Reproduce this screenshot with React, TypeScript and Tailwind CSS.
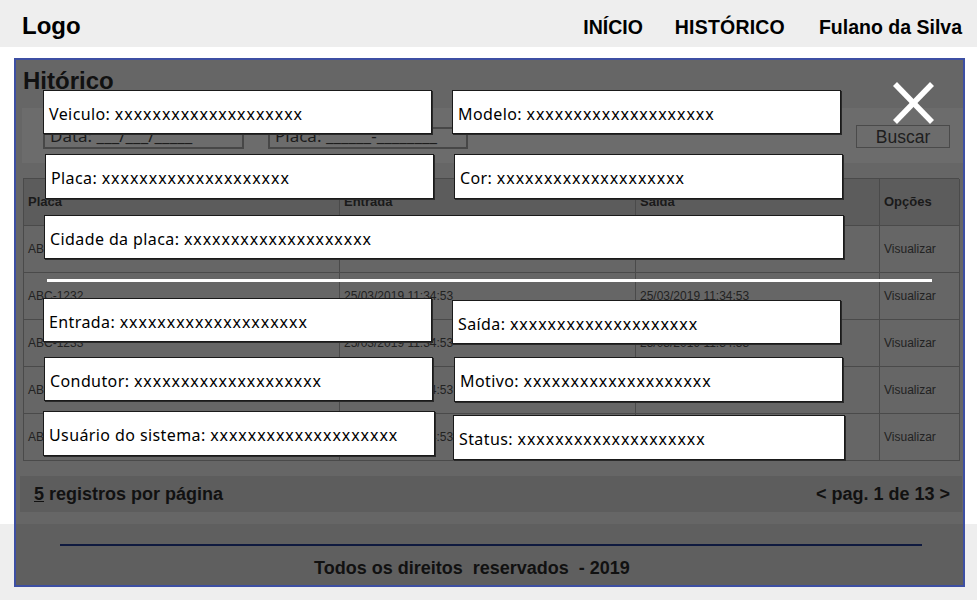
type Row = { placa: string; entrada: string; saida: string }

const rows: Row[] = [
  { placa: 'ABC-1231', entrada: '25/03/2019 11:34:53', saida: '25/03/2019 11:34:53' },
  { placa: 'ABC-1232', entrada: '25/03/2019 11:34:53', saida: '25/03/2019 11:34:53' },
  { placa: 'ABC-1233', entrada: '25/03/2019 11:34:53', saida: '25/03/2019 11:34:53' },
  { placa: 'ABC-1234', entrada: '25/03/2019 11:34:53', saida: '25/03/2019 11:34:53' },
  { placa: 'ABC-1235', entrada: '25/03/2019 11:34:53', saida: '25/03/2019 11:34:53' },
]

const XS = 'xxxxxxxxxxxxxxxxxxxx'

function Field({ label, className }: { label: string; className: string }) {
  return (
    <div
      className={`flex items-center bg-white border border-[#1a1a1a] shadow-[1px_1px_0_#2a2a2a] pl-[5px] pt-[3px] text-[16px] text-black font-['Noto_Sans',sans-serif] ${className}`}
    >
      <span className="whitespace-pre tracking-[0.4px]">{label}: </span>
      <span className="tracking-[0.94px]">{XS}</span>
    </div>
  )
}

function CloseIcon() {
  return (
    <svg width="41" height="42" viewBox="0 0 41 42" className="absolute left-[877px] top-[22px]">
      <line x1="2" y1="2" x2="39" y2="40" stroke="white" strokeWidth="5.5" />
      <line x1="39" y1="2" x2="2" y2="40" stroke="white" strokeWidth="5.5" />
    </svg>
  )
}

export default function App() {
  return (
    <div className="relative w-[977px] h-[600px] overflow-hidden bg-[linear-gradient(to_bottom,#ffffff_524px,#eeeeee_524px)] font-['Liberation_Sans',Arial,sans-serif] text-black">
      {/* top bar */}
      <header className="h-[47px] bg-[#eeeeee] flex items-center pl-[22px] pr-[15px]">
        <span className="text-[24px] font-bold leading-none mt-[4px]">Logo</span>
        <nav className="ml-auto flex items-center gap-[32px] text-[19.5px] font-bold leading-none mt-[9px]">
          <span>INÍCIO</span>
          <span className="tracking-[0.2px]">HISTÓRICO</span>
          <span className="ml-[2px]">Fulano da Silva</span>
        </nav>
      </header>

      <main className="pt-[11px] pl-[14px]">
        <div className="relative w-[951px] h-[529px] border-2 border-[#3d4fa3] bg-[#666666] flex flex-col">
          <h1 className="mt-[9px] ml-[7px] text-[24px] leading-[24px] font-bold text-[#111]">Hitórico</h1>

          {/* filters */}
          <div className="mt-[15px] ml-[6px] w-[941px] h-[55px] bg-[#6c6c6c] flex items-start">
            <div className="ml-[21px] mt-[19px] w-[201px] h-[22px] border-2 border-[#474747] flex items-end pl-[5px] overflow-hidden font-['Noto_Sans',sans-serif] text-[17px] leading-[22px] text-[#1c1c1c] whitespace-pre">
              Data: ___/___/_____
            </div>
            <div className="ml-[24px] mt-[19px] w-[200px] h-[22px] border-2 border-[#474747] flex items-end pl-[5px] overflow-hidden font-['Noto_Sans',sans-serif] text-[17px] leading-[22px] text-[#1c1c1c] whitespace-pre">
              Placa: ______-________
            </div>
            <div className="ml-auto mr-[13px] mt-[17px] w-[94px] h-[23px] border border-[#4a4a4a] flex items-center justify-center pt-[2px] text-[17.5px] text-[#1e1e1e]">
              Buscar
            </div>
          </div>

          {/* table */}
          <div className="mt-[15px] ml-[7px] w-[936px] border-t border-l border-[#4a4a4a] grid grid-cols-[316px_296px_244px_80px]">
            {['Placa', 'Entrada', 'Saída', 'Opções'].map((h) => (
              <div
                key={h}
                className="h-[47px] bg-[#5c5c5c] border-r border-b border-[#4a4a4a] flex items-center px-[4px] text-[13px] font-bold text-[#1a1a1a]"
              >
                {h}
              </div>
            ))}
            {rows.map((r) => (
              <div key={r.placa} className="contents">
                <div className="h-[47px] border-r border-b border-[#4a4a4a] flex items-center px-[4px] text-[12px] text-[#222]">
                  {r.placa}
                </div>
                <div className="h-[47px] border-r border-b border-[#4a4a4a] flex items-center px-[4px] text-[12px] text-[#222]">
                  {r.entrada}
                </div>
                <div className="h-[47px] border-r border-b border-[#4a4a4a] flex items-center px-[4px] text-[12px] text-[#222]">
                  {r.saida}
                </div>
                <div className="h-[47px] border-r border-b border-[#4a4a4a] flex items-center px-[4px] text-[12px] text-[#222]">
                  Visualizar
                </div>
              </div>
            ))}
          </div>

          {/* pagination */}
          <div className="mt-[15px] ml-[4px] w-[942px] h-[36px] bg-[#5d5d5d] flex items-center justify-between pl-[14px] pr-[12px] text-[18px] font-bold text-[#111]">
            <span>
              <span className="underline">5</span> registros por página
            </span>
            <span>&lt; pag. 1 de 13 &gt;</span>
          </div>

          {/* footer, dimmed */}
          <footer className="mt-[12px] h-[61px] bg-[#5f5f5f] flex flex-col">
            <div className="mt-[20px] ml-[44px] w-[862px] h-[2px] bg-[#0f1a3f]" />
            <p className="mt-[12px] ml-[298px] text-[18px] leading-[20px] font-bold text-[#111] whitespace-pre">
              Todos os direitos  reservados  - 2019
            </p>
          </footer>

          {/* detail modal on top */}
          <div className="absolute inset-0 flex flex-col">
            <CloseIcon />
            <div className="mt-[30px] flex items-start">
              <Field label="Veiculo" className="ml-[27px] w-[389px] h-[44px]" />
              <Field label="Modelo" className="ml-[20px] w-[389px] h-[44px]" />
            </div>
            <div className="mt-[20px] flex items-start">
              <Field label="Placa" className="ml-[29px] w-[389px] h-[45px]" />
              <Field label="Cor" className="ml-[20px] w-[389px] h-[45px]" />
            </div>
            <div className="mt-[16px] flex items-start">
              <Field label="Cidade da placa" className="ml-[28px] w-[800px] h-[44px]" />
            </div>
            <div className="mt-[20px] ml-[31px] w-[885px] h-[3px] bg-white" />
            <div className="mt-[16px] flex items-start">
              <Field label="Entrada" className="ml-[27px] w-[389px] h-[44px]" />
              <Field label="Saída" className="ml-[20px] mt-[2px] w-[389px] h-[44px]" />
            </div>
            <div className="mt-[13px] flex items-start">
              <Field label="Condutor" className="ml-[28px] w-[389px] h-[44px]" />
              <Field label="Motivo" className="ml-[21px] w-[389px] h-[45px]" />
            </div>
            <div className="mt-[9px] flex items-start">
              <Field label="Usuário do sistema" className="ml-[27px] w-[392px] h-[45px]" />
              <Field label="Status" className="ml-[18px] mt-[4px] w-[392px] h-[45px]" />
            </div>
          </div>
        </div>
      </main>
    </div>
  )
}
